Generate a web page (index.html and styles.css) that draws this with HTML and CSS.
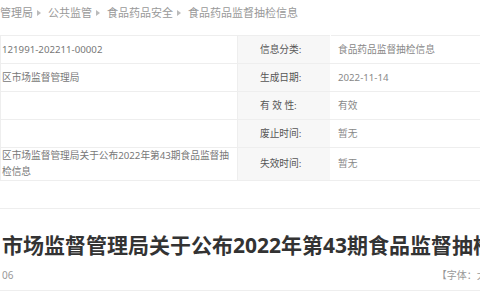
FILE: index.html
```html
<!doctype html>
<html lang="zh-CN">
<head>
<meta charset="utf-8">
<title>食品药品监督抽检信息</title>
<link rel="stylesheet" href="styles.css">
</head>
<body>
<div class="crumb">
	<a>管理局</a><i></i><a>公共监管</a><i></i><a>食品药品安全</a><i></i><a>食品药品监督抽检信息</a>
</div>
<table class="info">
	<tr>
		<td class="val-l">121991-202211-00002</td>
		<td class="lab">信息分类:</td>
		<td class="val">食品药品监督抽检信息</td>
	</tr>
	<tr>
		<td class="val-l">区市场监督管理局</td>
		<td class="lab">生成日期:</td>
		<td class="val">2022-11-14</td>
	</tr>
	<tr>
		<td class="val-l"></td>
		<td class="lab">有&nbsp;效&nbsp;性:</td>
		<td class="val">有效</td>
	</tr>
	<tr>
		<td class="val-l"></td>
		<td class="lab">废止时间:</td>
		<td class="val">暂无</td>
	</tr>
	<tr class="tall">
		<td class="val-l">区市场监督管理局关于公布2022年第43期食品监督抽检信息</td>
		<td class="lab">失效时间:</td>
		<td class="val">暂无</td>
	</tr>
</table>
<div class="article">
	<h1>市场监督管理局关于公布2022年第43期食品监督抽检信息</h1>
	<div class="meta">
		<span class="date">06</span>
		<span class="size">【字体：大 中 小】</span>
	</div>
</div>
</body>
</html>
```
FILE: styles.css
```css
html,body,h1,table,td{margin:0;padding:0}
body{width:480px;overflow:hidden;background:#fff;font:11px/16px "Noto Sans","Noto Sans CJK SC",sans-serif;color:#666}
.crumb{height:35px;box-sizing:border-box;padding-top:5px;line-height:16px;color:#999;white-space:nowrap;display:flex;align-items:flex-start}
.crumb a{display:block}
.crumb i{display:block;width:0;height:0;border-left:4px solid #bbb;border-top:3px solid transparent;border-bottom:3px solid transparent;margin:5px 7px 0 4px}
.info{width:560px;border-collapse:collapse;font-size:9.7px;line-height:16px}
.info td{border:1px solid #eee;height:27px;padding:0;vertical-align:middle}
.info .val-l{width:232px;padding-left:1px;padding-right:3px;color:#777}
.info .lab{width:70px;padding-left:22px;background:#f7f7f7;color:#555;border-right-color:#fff}
.info .val{padding-left:7px;color:#888}
.info .tall td{height:30px}
.article{margin-top:27px;border-top:1px solid #eee;border-bottom:1px solid #eee}
.article h1{padding:21px 0 0 2px;font-size:21px;line-height:30px;font-weight:bold;color:#333;white-space:nowrap;overflow:hidden}
.meta{display:flex;justify-content:space-between;margin-top:7px;padding:0 0 7px 2px;font-size:10px;color:#999;white-space:nowrap}
.meta .size{margin-right:-42px}
```
